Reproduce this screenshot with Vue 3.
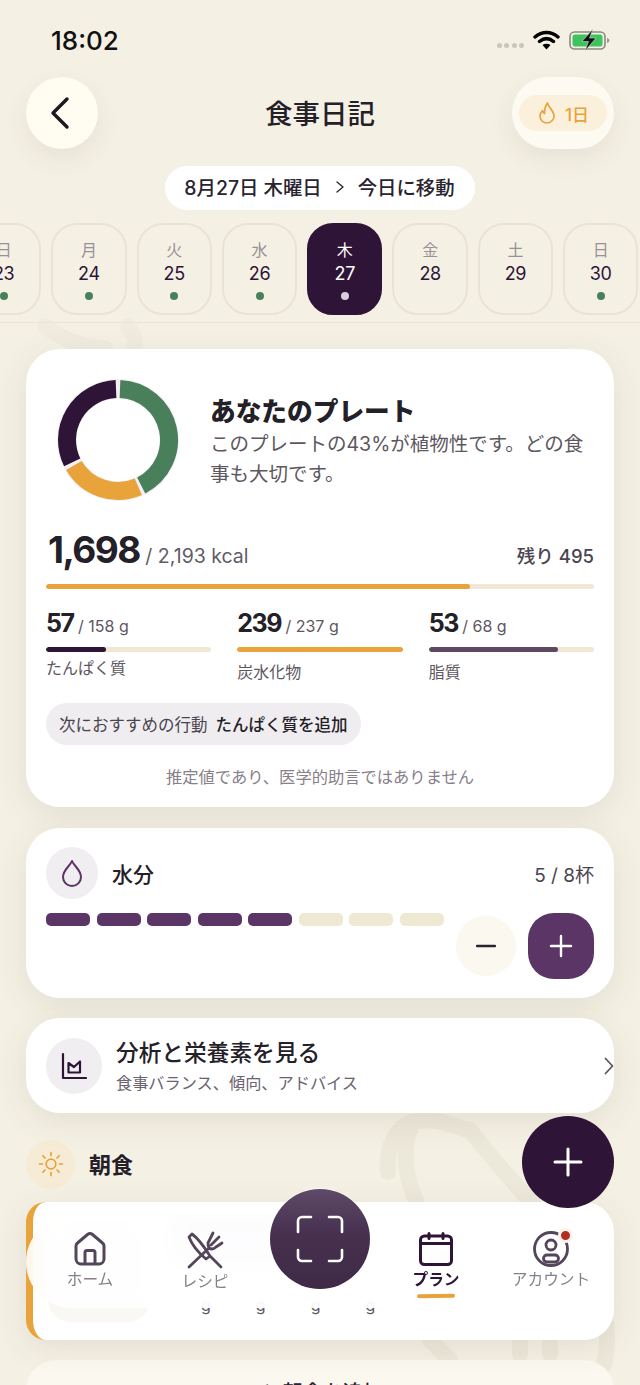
<script setup>
const days = [
  { w: '日', d: 23, dot: true },
  { w: '月', d: 24, dot: true },
  { w: '火', d: 25, dot: true },
  { w: '水', d: 26, dot: true },
  { w: '木', d: 27, dot: true, active: true },
  { w: '金', d: 28, dot: false },
  { w: '土', d: 29, dot: false },
  { w: '日', d: 30, dot: true },
]

const macros = [
  { value: 57, goal: '158 g', label: 'たんぱく質', pct: 36, color: '#2e1437' },
  { value: 239, goal: '237 g', label: '炭水化物', pct: 100, color: '#e8a33a' },
  { value: 53, goal: '68 g', label: '脂質', pct: 78, color: '#5c4a63' },
]

const cups = [true, true, true, true, true, false, false, false]
</script>

<template>
  <div class="page">
    <svg class="watermark" width="640" height="1385" viewBox="0 0 640 1385" fill="none">
      <path d="M45 326c18 14 40 22 60 22M128 326c6 8 8 14 6 22" stroke="#efebdf" stroke-width="16" stroke-linecap="round" />
      <path d="M388 1172c-2-25 8-45 24-50 22-6 44 4 60 10M410 1130c-8 20-4 50 6 70M470 1130c30 40 70 80 110 130 24 30 32 70 24 105M430 1340l20 20M520 1342v12M550 1342v12" stroke="#ece8da" stroke-width="16" stroke-linecap="round" />
    </svg>

    <div class="status">
      <span class="time">18:02</span>
      <div class="status-icons">
        <span class="signal"><i></i><i></i><i></i><i></i></span>
        <svg width="27" height="20" viewBox="0 0 27 20">
          <path d="M2 7C9 1 18 1 25 7M6.500 11.500c4.500-3.700 9.500-3.700 14 0" fill="none" stroke="#000" stroke-width="3.400" stroke-linecap="round" />
          <path d="M9.500 15c2.500-1.800 5.500-1.800 8 0l-4 4.500z" fill="#000" />
        </svg>
        <svg width="41" height="22" viewBox="0 0 41 22">
          <rect x="1" y="3" width="35" height="17" rx="4.500" fill="none" stroke="#8a8a80" stroke-width="1.600" />
          <rect x="3.500" y="5.500" width="30" height="12" rx="2.500" fill="#3fc35f" />
          <path d="M38 9v5c1.500-.4 2.500-1.300 2.500-2.500S39.500 9.400 38 9z" fill="#9a9a90" />
          <path d="M24 0L13 12.500h6.500L16 22l11-13h-6.500z" fill="#111" stroke="#e8f3dc" stroke-width=".5" />
        </svg>
      </div>
    </div>

    <header class="topbar">
      <button class="back">
        <svg width="26" height="36" viewBox="0 0 26 36" fill="none">
          <path d="M20 4L6 18l14 14" stroke="#1c1a1d" stroke-width="3.400" stroke-linecap="round" stroke-linejoin="round" />
        </svg>
      </button>
      <h1>食事日記</h1>
      <div class="streak-wrap">
        <div class="streak">
          <svg width="20" height="24" viewBox="0 0 20 24" fill="none">
            <path d="M10.500 2c.5 4 5.500 6.500 6.500 12 .6 4-3 8-7 8s-7-3-7-7c0-2.500 1-4 2.500-5.500.3 1.500 1 2.500 2 3C7.500 9 8 5 10.500 2z" stroke="#e8a33a" stroke-width="1.700" stroke-linejoin="round" />
          </svg>
          <span>1日</span>
        </div>
      </div>
    </header>

    <div class="date-row">
      <div class="date-pill">
        <span>8月27日 木曜日</span>
        <svg width="10" height="14" viewBox="0 0 10 14" fill="none">
          <path d="M2 2l6 5-6 5" stroke="#2a2330" stroke-width="1.300" stroke-linecap="round" stroke-linejoin="round" />
        </svg>
        <span>今日に移動</span>
      </div>
    </div>

    <div class="week">
      <div v-for="day in days" :key="day.d" class="day" :class="{ active: day.active }">
        <span class="dow">{{ day.w }}</span>
        <span class="num">{{ day.d }}</span>
        <i class="dot" :class="{ hidden: !day.dot }"></i>
      </div>
    </div>
    <div class="rule"></div>

    <main class="content">
      <section class="card plate">
        <div class="plate-top">
          <svg class="donut" width="124" height="124" viewBox="0 0 124 124">
            <circle cx="62" cy="62" r="61" fill="#f3eff3" />
            <circle cx="62" cy="62" r="41.500" fill="#fff" />
            <g fill="none" stroke-width="18">
              <path d="M64 11A51 51 0 0 1 85.200 107.400" stroke="#4a7f5b" />
              <path d="M82.300 108.700A51 51 0 0 1 17.900 87.500" stroke="#e8a33a" />
              <path d="M16.200 84.400A51 51 0 0 1 60 11" stroke="#2e1437" />
            </g>
          </svg>
          <div class="plate-text">
            <h2>あなたのプレート</h2>
            <p>このプレートの43%が植物性です。どの食事も大切です。</p>
          </div>
        </div>

        <div class="kcal-row">
          <div>
            <span class="kcal">1,698</span>
            <span class="kcal-goal"> / 2,193 kcal</span>
          </div>
          <span class="remain">残り 495</span>
        </div>
        <div class="bar main-bar"><div class="fill" style="width: 77.400%; background: #e8a33a"></div></div>

        <div class="macros">
          <div v-for="m in macros" :key="m.label" class="macro">
            <div class="macro-val"><b>{{ m.value }}</b><span> / {{ m.goal }}</span></div>
            <div class="bar"><div class="fill" :style="{ width: m.pct + '%', background: m.color }"></div></div>
            <div class="macro-label">{{ m.label }}</div>
          </div>
        </div>

        <div class="next-chip">
          <span>次におすすめの行動</span>
          <b>たんぱく質を追加</b>
        </div>
        <p class="note">推定値であり、医学的助言ではありません</p>
      </section>

      <section class="card water">
        <div class="water-head">
          <span class="round-icon water-icon">
            <svg width="22" height="30" viewBox="0 0 22 30" fill="none">
              <path d="M11 3c2 5 9 9 9 16a9 9 0 0 1-18 0c0-7 7-11 9-16z" stroke="#5a3565" stroke-width="2" stroke-linejoin="round" />
            </svg>
          </span>
          <span class="water-title">水分</span>
          <span class="water-count">5 / 8杯</span>
        </div>
        <div class="water-body">
          <div class="cups">
            <i v-for="(on, i) in cups" :key="i" :class="{ on }"></i>
          </div>
          <div class="water-btns">
            <button class="minus">
              <svg width="20" height="4" viewBox="0 0 20 4"><path d="M1 2h18" stroke="#2a2330" stroke-width="2.400" stroke-linecap="round" /></svg>
            </button>
            <button class="plus">
              <svg width="24" height="24" viewBox="0 0 24 24"><path d="M12 2v20M2 12h20" stroke="#fff" stroke-width="2.400" stroke-linecap="round" /></svg>
            </button>
          </div>
        </div>
      </section>

      <section class="card insight">
        <span class="round-icon insight-icon">
          <svg width="26" height="28" viewBox="0 0 26 28" fill="none">
            <path d="M2 2v24h23" stroke="#2e1437" stroke-width="2.200" stroke-linecap="round" stroke-linejoin="round" />
            <path d="M7.500 20.500V11l5.500 4 6-5.500v11z" stroke="#2e1437" stroke-width="2.200" stroke-linejoin="round" />
          </svg>
        </span>
        <div class="insight-text">
          <h3>分析と栄養素を見る</h3>
          <p>食事バランス、傾向、アドバイス</p>
        </div>
        <svg class="insight-arrow" width="10" height="18" viewBox="0 0 10 18" fill="none">
          <path d="M1.500 1.500L8.500 9l-7 7.500" stroke="#5c5560" stroke-width="1.800" stroke-linecap="round" stroke-linejoin="round" />
        </svg>
      </section>

      <div class="meal-head">
        <span class="sun">
          <svg width="26" height="26" viewBox="0 0 26 26" fill="none" stroke="#e8a33a" stroke-width="1.700" stroke-linecap="round">
            <circle cx="13" cy="13" r="4.800" />
            <path d="M13 1.500v3M13 21.500v3M1.500 13h3M21.500 13h3M4.900 4.900L7 7M19 19l2.100 2.100M4.900 21.100L7 19M19 7l2.100-2.100" />
          </svg>
        </span>
        <h3>朝食</h3>
      </div>

      <section class="card meal">
        <div class="meal-thumb"></div>
        <div class="meal-info">
          <div class="meal-name">
            <i></i><i></i>
          </div>
          <div class="meal-macros">
            <span>g</span><span>g</span><span>g</span><span>g</span>
          </div>
        </div>
      </section>

      <section class="card add-meal">＋ 朝食を追加</section>
    </main>

    <button class="fab">
      <svg width="30" height="30" viewBox="0 0 30 30"><path d="M15 2v26M2 15h26" stroke="#fff" stroke-width="3" stroke-linecap="round" /></svg>
    </button>

    <nav class="tabbar">
      <div class="tab">
        <svg width="36" height="36" viewBox="0 0 36 36" fill="none" stroke="#54465a" stroke-width="3" stroke-linejoin="round">
          <path d="M15.500 3.500a4 4 0 0 1 5 0l10 8.500a4 4 0 0 1 1.500 3V28a5 5 0 0 1-5 5H9a5 5 0 0 1-5-5V15a4 4 0 0 1 1.500-3z" />
          <path d="M13 33V21.500a2 2 0 0 1 2-2h6a2 2 0 0 1 2 2V33" />
        </svg>
        <span>ホーム</span>
      </div>
      <div class="tab">
        <svg width="38" height="38" viewBox="0 0 38 38" fill="none" stroke="#54465a" stroke-width="2.800" stroke-linecap="round" stroke-linejoin="round">
          <path d="M3 6l3-3c7 5 13 14 18 22l-4 3C14 23 6 14 3 6zM24 25l11 11" />
          <path d="M3 36l20-19M27 2l-5 10c0 3 1 5 1 5 3 2 5 1 7-1l6-4M33 6l-8 8" />
        </svg>
        <span>レシピ</span>
      </div>
      <div class="tab-gap"></div>
      <div class="tab current">
        <svg width="36" height="36" viewBox="0 0 36 36" fill="none" stroke="#2e1437" stroke-width="3" stroke-linecap="round" stroke-linejoin="round">
          <rect x="2.500" y="5" width="31" height="28.500" rx="4" />
          <path d="M2.500 12.500h31M11 2.500v5M25 2.500v5" />
        </svg>
        <span>プラン</span>
        <i class="tab-line"></i>
      </div>
      <div class="tab">
        <span class="avatar-wrap">
          <svg width="36" height="36" viewBox="0 0 36 36" fill="none" stroke="#54465a" stroke-width="2.800">
            <circle cx="18" cy="18" r="16.500" />
            <circle cx="18" cy="14" r="5" />
            <rect x="10.500" y="24" width="15" height="7" rx="3.500" />
          </svg>
          <i class="badge"></i>
        </span>
        <span>アカウント</span>
      </div>
    </nav>

    <button class="scan">
      <svg width="48" height="48" viewBox="0 0 48 48" fill="none" stroke="#fff" stroke-width="2.600" stroke-linecap="round" stroke-linejoin="round">
        <path d="M15 2H6a4 4 0 0 0-4 4v11M33 2h9a4 4 0 0 1 4 4v11M15 46H6a4 4 0 0 1-4-4v-7M33 46h9a4 4 0 0 0 4-4v-7" />
      </svg>
    </button>
  </div>
</template>

<style>
html,
body {
  margin: 0;
  background: #f4f0e4;
}
</style>

<style scoped>
.page {
  position: relative;
  width: 640px;
  height: 1385px;
  overflow: hidden;
  background: #f4f0e4;
  color: #242027;
  font-family: Inter, 'Noto Sans CJK JP', sans-serif;
}

.watermark {
  position: absolute;
  top: 0;
  left: 0;
}

button {
  border: none;
  padding: 0;
  font: inherit;
}

.status {
  position: relative;
  display: flex;
  align-items: center;
  justify-content: space-between;
  height: 30px;
  padding: 25px 30px 0 51px;
}

.time {
  font-size: 26px;
  font-weight: 500;
  color: #111;
}

.status-icons {
  display: flex;
  align-items: center;
  gap: 9px;
}

.signal {
  display: flex;
  gap: 2.500px;
  margin-top: 10px;
}

.signal i {
  width: 5px;
  height: 5px;
  border-radius: 50%;
  background: #c9c6bd;
}

.topbar {
  position: relative;
  display: grid;
  grid-template-columns: 1fr auto 1fr;
  align-items: center;
  height: 72px;
  margin-top: 22px;
  padding: 0 26px;
}

.back {
  display: flex;
  align-items: center;
  justify-content: center;
  width: 72px;
  height: 72px;
  padding-right: 4px;
  border-radius: 50%;
  background: #fffdf2;
  box-shadow: 0 10px 24px rgba(90, 75, 50, 0.08);
}

h1 {
  margin: 0;
  padding-bottom: 2px;
  font-size: 27.500px;
  font-weight: 500;
}

.streak-wrap {
  display: flex;
  align-items: center;
  justify-content: center;
  justify-self: end;
  width: 102px;
  height: 72px;
  border-radius: 36px;
  background: #fdfbf1;
  box-shadow: 0 10px 24px rgba(90, 75, 50, 0.08);
}

.streak {
  display: flex;
  align-items: center;
  gap: 8px;
  justify-content: center;
  width: 88px;
  height: 36px;
  border-radius: 18px;
  background: #fbf0db;
  color: #e8a33a;
  font-size: 17px;
  font-weight: 500;
}

.date-row {
  position: relative;
  display: flex;
  justify-content: center;
  margin-top: 17px;
}

.date-pill {
  display: flex;
  align-items: center;
  gap: 13px;
  box-sizing: border-box;
  height: 44px;
  padding: 0 20px 3px 19px;
  border-radius: 22px;
  background: #fff;
  font-size: 19.400px;
  font-weight: 500;
  color: #2a2330;
  white-space: nowrap;
}

.week {
  position: relative;
  display: flex;
  gap: 10px;
  margin-top: 13px;
  margin-left: -34px;
}

.day {
  display: flex;
  flex: none;
  flex-direction: column;
  align-items: center;
  box-sizing: border-box;
  width: 75.300px;
  height: 92px;
  padding-top: 14px;
  border: 2px solid #e8e3d5;
  border-radius: 26px;
}

.dow {
  height: 22px;
  font-size: 16px;
  line-height: 22px;
  color: #9a9098;
}

.num {
  height: 26px;
  font-size: 18px;
  line-height: 26px;
  color: #2e1437;
  letter-spacing: -0.300px;
}

.dot {
  width: 8px;
  height: 8px;
  margin-top: 5px;
  border-radius: 50%;
  background: #4a7f5b;
}

.dot.hidden {
  visibility: hidden;
}

.day.active {
  border-color: #2e1437;
  background: #2e1437;
}

.day.active .dow,
.day.active .num {
  color: #fff;
}

.day.active .dot {
  background: #d9cfdc;
}

.rule {
  position: relative;
  height: 1px;
  margin-top: 7px;
  background: #e9e4d7;
}

.content {
  position: relative;
  display: flex;
  flex-direction: column;
  gap: 20px;
  padding: 26px 26px 0;
}

.card {
  border-radius: 34px;
  background: #fff;
  box-shadow: 0 8px 32px rgba(90, 75, 50, 0.1);
}

.plate {
  box-sizing: border-box;
  height: 458px;
  padding: 29px 20px 0;
}

.plate-top {
  display: flex;
  gap: 30px;
  padding-left: 10px;
}

.donut {
  flex: none;
}

.plate-text {
  padding: 17px 0 0;
}

h2 {
  margin: 0;
  font-size: 25.700px;
  font-weight: 800;
  line-height: 33px;
  color: #242027;
}

.plate-text p {
  margin: 1px 0 0;
  font-size: 19.500px;
  line-height: 30px;
  color: #5e5762;
}

.kcal-row {
  display: flex;
  align-items: flex-end;
  justify-content: space-between;
  height: 44px;
  margin-top: 26px;
  padding-left: 2px;
}

.kcal {
  font-size: 37px;
  font-weight: 700;
  letter-spacing: -1.500px;
  color: #242027;
}

.kcal-goal {
  font-size: 19.500px;
  color: #625b66;
}

.remain {
  padding-bottom: 4px;
  font-size: 18.500px;
  font-weight: 500;
  color: #4a4450;
}

.bar {
  height: 5px;
  border-radius: 3px;
  background: #f0e8d4;
  overflow: hidden;
}

.fill {
  height: 100%;
  border-radius: 3px;
}

.main-bar {
  margin-top: 12px;
}

.macros {
  display: grid;
  grid-template-columns: repeat(3, 1fr);
  gap: 26px;
  margin-top: 19px;
}

.macro-val {
  height: 30px;
  line-height: 30px;
}

.macro-val b {
  font-size: 25px;
  font-weight: 700;
  letter-spacing: -1.500px;
}

.macro-val span {
  font-size: 16px;
  color: #5e5762;
}

.macro .bar {
  margin-top: 9px;
}

.macro-label {
  margin-top: 7px;
  font-size: 16px;
  line-height: 26px;
  color: #5e5762;
}

.macro:first-child .macro-label {
  margin-top: 3px;
}

.next-chip {
  display: inline-flex;
  gap: 8px;
  align-items: center;
  height: 42px;
  margin-top: 18px;
  padding: 0 13px;
  border-radius: 21px;
  background: #efedef;
  font-size: 16.500px;
  color: #4a4450;
}

.next-chip b {
  font-weight: 500;
  color: #242027;
}

.note {
  margin: 19px 0 0;
  font-size: 16.300px;
  text-align: center;
  color: #87808a;
}

.water {
  box-sizing: border-box;
  height: 170px;
  margin-top: 1px;
  padding: 19px 20px 0;
}

.water-head {
  display: flex;
  align-items: center;
}

.round-icon {
  display: flex;
  flex: none;
  align-items: center;
  justify-content: center;
  border-radius: 50%;
  background: #f1eef1;
}

.water-icon {
  width: 52px;
  height: 52px;
}

.water-title {
  margin-left: 14px;
  font-size: 21px;
  font-weight: 500;
}

.water-count {
  margin-left: auto;
  font-size: 19px;
  color: #4a4450;
}

.water-body {
  display: flex;
  justify-content: space-between;
  margin-top: 14px;
}

.cups {
  display: flex;
  gap: 6.500px;
  height: 13px;
}

.cups i {
  width: 44px;
  height: 13px;
  border-radius: 5px;
  background: #efe8d3;
}

.cups i.on {
  background: #5a3565;
}

.water-btns {
  display: flex;
  align-items: center;
  gap: 12px;
}

.minus {
  display: flex;
  align-items: center;
  justify-content: center;
  width: 60px;
  height: 60px;
  border-radius: 50%;
  background: #fbf8ef;
}

.plus {
  display: flex;
  align-items: center;
  justify-content: center;
  width: 66px;
  height: 66px;
  border-radius: 26px;
  background: #5a3565;
}

.insight {
  position: relative;
  display: flex;
  align-items: center;
  gap: 14px;
  box-sizing: border-box;
  height: 95px;
  padding: 0 20px;
}

.insight-icon {
  width: 56px;
  height: 56px;
}

.insight-text h3 {
  margin: 0;
  font-size: 22.700px;
  font-weight: 500;
  line-height: 32px;
}

.insight-text p {
  margin: 3px 0 0;
  font-size: 16.200px;
  line-height: 22px;
  color: #6a6370;
}

.insight-arrow {
  position: absolute;
  top: 39px;
  right: 0;
}

.meal-head {
  display: flex;
  align-items: center;
  gap: 14px;
  height: 48px;
  margin-top: 7px;
  margin-bottom: -6px;
}

.meal-head h3 {
  margin: 0;
  padding-bottom: 3px;
  font-size: 22px;
  font-weight: 700;
}

.sun {
  display: flex;
  align-items: center;
  justify-content: center;
  width: 49px;
  height: 49px;
  border-radius: 50%;
  background: #f6ecd6;
}

.meal {
  position: relative;
  display: flex;
  flex: none;
  box-sizing: border-box;
  height: 138px;
  overflow: hidden;
  padding: 18px 20px 0 15px;
  border-left: 7px solid #e8a33a;
  border-radius: 20px 30px 30px 20px;
}

.meal-thumb {
  width: 102px;
  height: 102px;
  border-radius: 22px;
  background: #faf8f5;
}

.meal-info {
  flex: 1;
  padding: 0 0 0 20px;
}

.meal-name {
  display: flex;
  flex-direction: column;
  gap: 8px;
}

.meal-name i {
  width: 170px;
  height: 20px;
  background: #e9e2ee;
  filter: blur(3px);
}

.meal-name i + i {
  width: 120px;
  height: 14px;
}

.meal-macros {
  display: flex;
  margin-top: 32px;
  padding-left: 31px;
  gap: 45px;
  font-size: 16px;
  line-height: 22px;
  color: #5e5762;
}

.add-meal {
  flex: none;
  box-sizing: border-box;
  height: 60px;
  padding-top: 17px;
  background: #fbf8ef;
  box-shadow: none;
  font-size: 20px;
  font-weight: 500;
  text-align: center;
  color: #2a2330;
}

.fab {
  position: absolute;
  top: 1116px;
  left: 522px;
  display: flex;
  align-items: center;
  justify-content: center;
  width: 92px;
  height: 92px;
  border-radius: 50%;
  background: #2e1437;
}

.tabbar {
  position: absolute;
  top: 1216px;
  left: 26px;
  display: flex;
  align-items: flex-start;
  gap: 3px;
  box-sizing: border-box;
  width: 588px;
  height: 92px;
  padding: 15px 0 0 8px;
  border-radius: 46px;
  background: rgba(255, 255, 255, 0.85);
  backdrop-filter: blur(10px);
}

.tab {
  position: relative;
  display: flex;
  flex-direction: column;
  align-items: center;
  width: 112px;
  font-size: 15.700px;
  color: #87808a;
}

.tab span:last-of-type {
  margin-top: 2px;
  line-height: 22px;
}

.tab-gap {
  width: 113px;
}

.tab.current {
  color: #2e1437;
  font-weight: 700;
}

.tab-line {
  width: 38px;
  height: 4px;
  margin-top: 3px;
  border-radius: 2px;
  background: #e8a33a;
  transform: rotate(-1deg);
}

.avatar-wrap {
  position: relative;
  display: flex;
  margin: 0 !important;
}

.badge {
  position: absolute;
  top: -3px;
  right: -4px;
  width: 9px;
  height: 9px;
  border: 3px solid #fdf3ea;
  border-radius: 50%;
  background: #b32d22;
}

.scan {
  position: absolute;
  top: 1189px;
  left: 270px;
  display: flex;
  align-items: center;
  justify-content: center;
  width: 100px;
  height: 100px;
  border-radius: 50%;
  background: linear-gradient(180deg, #5e4a68 0%, #47304f 45%, #3e2a46 100%);
  box-shadow: 0 0 0 1px rgba(255, 255, 255, 0.6);
}
</style>
